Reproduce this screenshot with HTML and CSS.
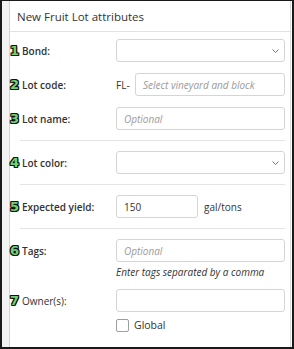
FILE: index.html
```html
<!DOCTYPE html>
<html lang="en">
<head>
  <meta charset="UTF-8" />
  <title>New Fruit Lot attributes</title>
  <link rel="stylesheet" href="styles.css">
</head>
<body>
  <div class="frame">
    <div class="gutter"></div>
    <div class="panel">
      <div class="panel-head">New Fruit Lot attributes</div>

      <div class="form">
        <div class="row">
          <div class="label"><span class="num">1</span>Bond:</div>
          <div class="select">
            <svg class="chev" width="7" height="4" viewBox="0 0 7 4"><polyline points="0.5,0.5 3.5,3.5 6.5,0.5" fill="none" stroke="#777" stroke-width="1"/></svg>
          </div>
        </div>

        <div class="row">
          <div class="label"><span class="num">2</span>Lot code:</div>
          <div class="inline">
            <span class="prefix">FL-</span>
            <div class="input grow"><span class="ph">Select vineyard and block</span></div>
          </div>
        </div>

        <div class="row">
          <div class="label"><span class="num">3</span>Lot name:</div>
          <div class="input"><span class="ph">Optional</span></div>
        </div>

        <hr class="divider">

        <div class="row">
          <div class="label"><span class="num">4</span>Lot color:</div>
          <div class="select">
            <svg class="chev" width="7" height="4" viewBox="0 0 7 4"><polyline points="0.5,0.5 3.5,3.5 6.5,0.5" fill="none" stroke="#777" stroke-width="1"/></svg>
          </div>
        </div>

        <hr class="divider">

        <div class="row">
          <div class="label"><span class="num">5</span>Expected yield:</div>
          <div class="inline">
            <div class="input short">150</div>
            <span class="unit">gal/tons</span>
          </div>
        </div>

        <hr class="divider">

        <div class="row">
          <div class="label"><span class="num">6</span>Tags:</div>
          <div class="input"><span class="ph">Optional</span></div>
        </div>
        <div class="help">Enter tags separated by a comma</div>

        <div class="row owner">
          <div class="label light"><span class="num">7</span>Owner(s):</div>
          <div class="input"></div>
        </div>
        <label class="check"><span class="box"></span>Global</label>
      </div>
    </div>
  </div>
</body>
</html>
```

FILE: styles.css
```css
body {
  margin: 0;
  font-family: 'Open Sans', sans-serif;
  color: #333;
  background: #fff;
}

.frame {
  width: 294px;
  height: 349px;
  box-sizing: border-box;
  border: 2px solid #1a1a1a;
  border-top-width: 1px;
  display: flex;
  background: #fff;
  overflow: hidden;
}

.gutter {
  width: 7px;
  background: #f3f3f3;
  flex-shrink: 0;
}

.panel {
  flex: 1;
  border-left: 1px solid #d4d4d4;
  border-right: 1px solid #dcdcdc;
  margin-right: 1px;
  background: #fff;
}

.panel-head {
  height: 31px;
  box-sizing: border-box;
  padding-left: 7px;
  font-size: 11.5px;
  font-weight: 500;
  line-height: 31px;
  color: #333;
  border-bottom: 1px solid #e2e2e2;
}

.form {
  display: flex;
  flex-direction: column;
  padding: 7px 5px 0 0;
}

.row {
  display: grid;
  grid-template-columns: 106px 1fr;
  align-items: center;
  margin-top: 11px;
}

.row:first-child {
  margin-top: 0;
}

.label {
  display: flex;
  align-items: center;
  font-size: 10px;
  font-weight: 600;
  color: #333;
}

.label.light {
  font-weight: 400;
}

.num {
  width: 11px;
  margin-left: -1px;
  margin-right: 2px;
  text-align: center;
  font-family: 'DejaVu Sans', sans-serif;
  font-weight: 700;
  font-size: 13px;
  line-height: 14px;
  color: #6fd372;
  text-shadow: 1px 0 0 #111, -1px 0 0 #111, 0 1px 0 #111, 0 -1px 0 #111,
    1px 1px 0 #111, -1px -1px 0 #111, 1px -1px 0 #111, -1px 1px 0 #111;
}

.input,
.select {
  height: 23px;
  box-sizing: border-box;
  border: 1px solid #d5d5d5;
  border-radius: 3px;
  padding: 0 7px;
  display: flex;
  align-items: center;
  font-size: 10px;
  color: #333;
  background: #fff;
}

.select {
  justify-content: flex-end;
  padding-right: 5px;
}

.chev {
  display: block;
}

.ph {
  font-style: italic;
  color: #9a9a9a;
}

.inline {
  display: flex;
  align-items: center;
}

.prefix {
  font-size: 10px;
  width: 19px;
  flex-shrink: 0;
}

.grow {
  flex: 1;
}

.short {
  width: 82px;
}

.unit {
  font-size: 10px;
  margin-left: 6px;
}

.divider {
  border: none;
  border-top: 1px solid #e4e4e4;
  margin: 10px 0 10px 10px;
}

.divider + .row {
  margin-top: 0;
}

.help {
  margin: 3px 0 0 106px;
  font-size: 10px;
  font-style: italic;
  line-height: 14px;
  color: #333;
}

.owner {
  margin-top: 10px;
}

.check {
  display: flex;
  align-items: center;
  margin: 6px 0 0 106px;
  font-size: 10.5px;
  color: #333;
}

.box {
  width: 13px;
  height: 13px;
  box-sizing: border-box;
  border: 1px solid #9d9d9d;
  border-radius: 2px;
  margin-right: 5px;
}
```
